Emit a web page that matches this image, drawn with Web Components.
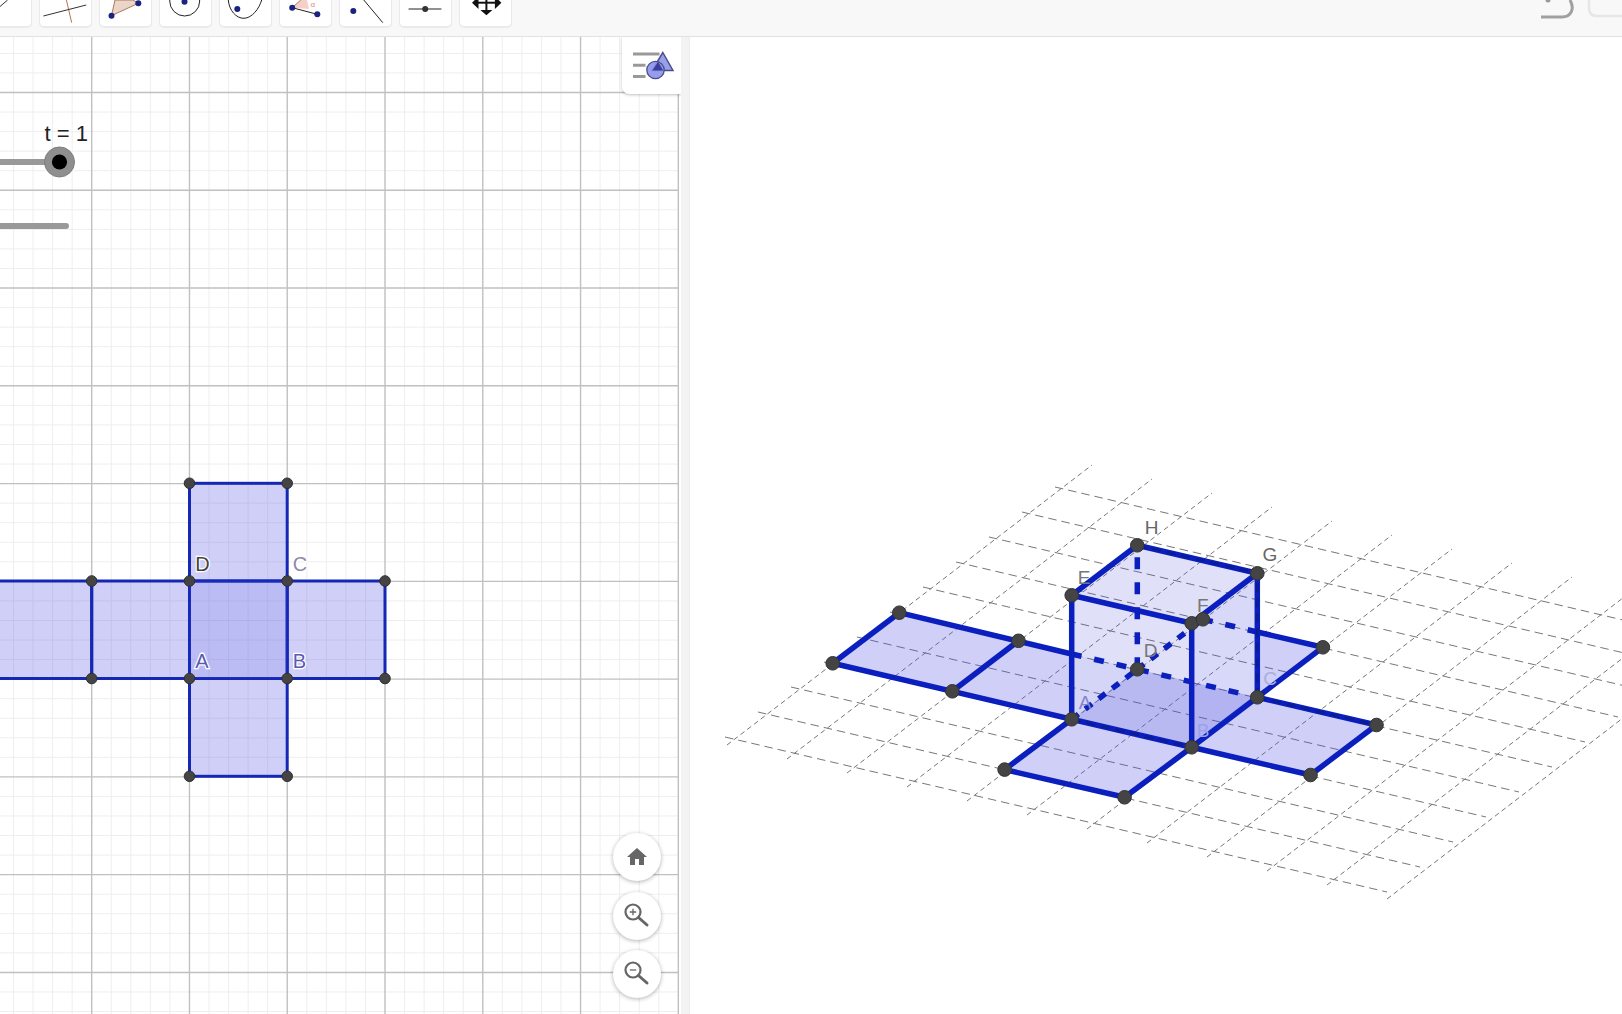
<!DOCTYPE html>
<html lang="en">
<head>
<meta charset="utf-8">
<title>Cube net</title>
<style>
  html, body { margin: 0; height: 100%; overflow: hidden; background: #fff; font-family: "Liberation Sans", Arial, sans-serif; }
</style>
</head>
<body>
<ggb-toolbar>
  <ggb-tool><svg viewBox="0 0 52 27"><path d="M20.4 7 28.6 0" stroke="#333" fill="none"/></svg></ggb-tool>
  <ggb-tool><svg viewBox="0 0 52 27"><path d="M27.4 0 32.7 22.7" stroke="#b5735a" fill="none"/><path d="M4.4 16 47.2 5" stroke="#333" fill="none"/></svg></ggb-tool>
  <ggb-tool><svg viewBox="0 0 52 27"><path d="M12.5 15.7 16 0H34L39.3 3.3Z" fill="#ead5c8" stroke="#a9785f"/><circle cx="12.5" cy="15.7" r="3" fill="#1a237e"/><circle cx="39.3" cy="3.3" r="3" fill="#1a237e"/></svg></ggb-tool>
  <ggb-tool><svg viewBox="0 0 52 27"><circle cx="25.7" cy="1" r="15" fill="none" stroke="#222"/><circle cx="25.5" cy="1.7" r="3" fill="#1a237e"/></svg></ggb-tool>
  <ggb-tool><svg viewBox="0 0 52 27"><path d="M9.3 0C10 10 17 18.5 25 18.3 33 18 40 9 42.7 0" fill="none" stroke="#222"/><circle cx="18.3" cy="9" r="3" fill="#1a237e"/></svg></ggb-tool>
  <ggb-tool><svg viewBox="0 0 52 27"><path d="M13.2 7.7 21.8 0H28L30 9Z" fill="#f6cfc8"/><path d="M13.2 7.7 21.8 0" stroke="#a9785f" fill="none"/><path d="M13.2 7.7 38.3 14.3" stroke="#222" fill="none"/><circle cx="13.2" cy="7.7" r="3" fill="#1a237e"/><circle cx="38.3" cy="14.3" r="3" fill="#1a237e"/><text x="31.5" y="7" font-size="8" fill="#d98f85" font-family="Liberation Sans">α</text></svg></ggb-tool>
  <ggb-tool><svg viewBox="0 0 52 27"><circle cx="14.3" cy="11" r="3" fill="#1a237e"/><path d="M24.8 0 43.8 22.7" stroke="#222" fill="none"/></svg></ggb-tool>
  <ggb-tool><svg viewBox="0 0 52 27"><path d="M9.6 9H42.4" stroke="#222" fill="none"/><circle cx="26.2" cy="9" r="3" fill="#333"/></svg></ggb-tool>
  <ggb-tool><svg viewBox="0 0 52 27"><path d="M27.4 0V11" stroke="#111" stroke-width="2" fill="none"/><path d="M18 2.7H37" stroke="#111" stroke-width="2" fill="none"/><path d="M13 2.7 19.5-3.5V9ZM42.4 2.7 35.9-3.5V9ZM27.4 15.2 21.4 10H33.4Z" fill="#111"/></svg></ggb-tool>
  <ggb-undo></ggb-undo>
</ggb-toolbar>
<ggb-workspace>
  <ggb-graphics>
    <ggb-style-button></ggb-style-button>
    <ggb-zoom-panel>
      <ggb-round-button><svg viewBox="0 0 24 24" width="24" height="24"><path d="M10 20v-6h4v6h5v-8h3L12 3 2 12h3v8z" fill="#666"/></svg></ggb-round-button>
      <ggb-round-button><svg viewBox="0 1.5 28 28" width="28" height="28" fill="none" stroke="#666"><circle cx="10" cy="11.5" r="7.5" stroke-width="2.2"/><path d="M15.5 17 24 24.5" stroke-width="3" stroke-linecap="round"/><path d="M6.8 11.5H13.2M10 8.3V14.7" stroke-width="1.3"/></svg></ggb-round-button>
      <ggb-round-button><svg viewBox="0 1.5 28 28" width="28" height="28" fill="none" stroke="#666"><circle cx="10" cy="11.5" r="7.5" stroke-width="2.2"/><path d="M15.5 17 24 24.5" stroke-width="3" stroke-linecap="round"/><path d="M6.8 11.5H13.2" stroke-width="1.3"/></svg></ggb-round-button>
    </ggb-zoom-panel>
  </ggb-graphics>
  <ggb-splitter></ggb-splitter>
  <ggb-view3d></ggb-view3d>
</ggb-workspace>

<script>
class GgbToolbar extends HTMLElement {
  constructor() {
    super();
    this.attachShadow({ mode: "open" }).innerHTML = `
      <style>
        :host { display: flex; height: 37px; box-sizing: border-box; background: #f8f8f8; border-bottom: 1px solid #e2e2e2; overflow: hidden; }
        .row { display: flex; flex: 1; gap: 7.3px; margin-left: -20.7px; align-items: flex-start; }
      </style>
      <div class="row"><slot></slot></div>`;
  }
}

class GgbTool extends HTMLElement {
  constructor() {
    super();
    this.attachShadow({ mode: "open" }).innerHTML = `
      <style>
        :host { display: block; flex: none; width: 52.7px; height: 27px; background: #fff; box-sizing: border-box;
                border: 1px solid #e9e9e9; border-top: 0; border-radius: 0 0 5px 5px; box-shadow: 0 1px 1px rgba(0,0,0,.06); }
        ::slotted(svg) { display: block; width: 52px; height: 27px; margin-left: -1px; overflow: hidden; }
      </style>
      <slot></slot>`;
  }
}

class GgbUndo extends HTMLElement {
  constructor() {
    super();
    this.attachShadow({ mode: "open" }).innerHTML = `
      <style>
        :host { display: block; margin-left: auto; flex: none; width: 92px; height: 36px; }
        svg { display: block; }
      </style>
      <svg width="92" height="36" viewBox="1530 0 92 36" fill="none">
        <circle cx="1548" cy="0" r="2.5" fill="#999"/>
        <path d="M1541 17H1562C1571 17 1575 9 1570 0" stroke="#a0a0a0" stroke-width="3"/>
        <path d="M1589 0V8Q1589 16 1597 16H1622" stroke="#e6e6e6" stroke-width="2.5"/>
      </svg>`;
  }
}

class GgbWorkspace extends HTMLElement {
  constructor() {
    super();
    this.attachShadow({ mode: "open" }).innerHTML = `
      <style>
        :host { display: flex; height: 977px; overflow: hidden; }
      </style>
      <slot></slot>`;
  }
}

class GgbGraphics extends HTMLElement {
  constructor() {
    super();
    const step = 97.77, x0 = 91.7, y0 = 92.5, minor = step / 5;
    let grid = "";
    for (let i = 0; i < 40; i++) {
      const x = x0 - step + i * minor;
      if (i % 5 && x < 678) grid += `<path d="M${x} 37V1014" stroke="#eee"/>`;
    }
    for (let i = 0; i < 60; i++) {
      const y = y0 - step + i * minor;
      if (i % 5 && y > 36 && y < 1014) grid += `<path d="M0 ${y}H678.5" stroke="#eee"/>`;
    }
    for (let i = 0; i < 7; i++) {
      grid += `<path d="M${x0 + i * step} 37V1014" stroke="#c0c0c0" stroke-width="1.4"/>`;
    }
    for (let i = 0; i < 10; i++) {
      grid += `<path d="M0 ${y0 + i * step}H678.5" stroke="#c0c0c0" stroke-width="1.4"/>`;
    }

    const X = [-6, 91.7, 189.5, 287.2, 385], Y = [483.3, 581, 678.5, 776.3];
    const rect = (x1, y1, x2, y2) => `<rect x="${x1}" y="${y1}" width="${x2 - x1}" height="${y2 - y1}" fill="rgb(77,77,225)" fill-opacity=".27" stroke="#1428b4" stroke-width="3"/>`;
    const net = rect(X[2], Y[0], X[3], Y[1]) + rect(X[0], Y[1], X[1], Y[2]) + rect(X[1], Y[1], X[2], Y[2])
      + rect(X[2], Y[1], X[3], Y[2]) + rect(X[3], Y[1], X[4], Y[2]) + rect(X[2], Y[2], X[3], Y[3])
      + `<rect x="${X[2]}" y="${Y[1]}" width="${X[3] - X[2]}" height="${Y[2] - Y[1]}" fill="rgb(77,77,235)" fill-opacity=".14"/>`;
    const pts = [[X[2], Y[0]], [X[3], Y[0]], [X[1], Y[1]], [X[2], Y[1]], [X[3], Y[1]], [X[4], Y[1]],
      [X[1], Y[2]], [X[2], Y[2]], [X[3], Y[2]], [X[4], Y[2]], [X[2], Y[3]], [X[3], Y[3]]]
      .map(p => `<circle cx="${p[0]}" cy="${p[1]}" r="5.3" fill="#444" stroke="#2e2e2e"/>`).join("");
    const label = (t, x, y, c) => `<text x="${x}" y="${y}" text-anchor="middle" font-size="20" fill="${c}" stroke="#fff" stroke-width="2.5" paint-order="stroke">${t}</text>`;

    this.attachShadow({ mode: "open" }).innerHTML = `
      <style>
        :host { display: block; position: relative; flex: none; width: 681px; height: 977px; background: #fff; overflow: hidden; }
        svg { display: block; font-family: "Liberation Sans", Arial, sans-serif; }
      </style>
      <svg width="681" height="977" viewBox="0 37 681 977">
        ${grid}
        ${net}
        ${pts}
        ${label("D", 202.5, 570.5, "#444")}
        ${label("C", 300, 570.5, "#8a8aac")}
        ${label("A", 202, 668, "#5a5ab4")}
        ${label("B", 299.5, 668, "#5a5ab4")}
        <path d="M0 162H50" stroke="#999" stroke-width="6"/>
        <circle cx="59.5" cy="162" r="15" fill="#8f8f8f" stroke="#7d7d7d"/>
        <circle cx="59.5" cy="162" r="7.6" fill="#000"/>
        <path d="M-5 226H66" stroke="#999" stroke-width="6" stroke-linecap="round"/>
        <text x="44.5" y="141.2" font-size="22" fill="#222">t = 1</text>
      </svg>
      <slot></slot>`;
  }
}

class GgbStyleButton extends HTMLElement {
  constructor() {
    super();
    this.attachShadow({ mode: "open" }).innerHTML = `
      <style>
        :host { display: block; position: absolute; top: 0; right: 0; width: 59.5px; height: 57px; background: #fff;
                border-radius: 0 0 0 7px; box-shadow: 0 1px 3px rgba(0,0,0,.25); }
        svg { display: block; }
      </style>
      <svg width="60" height="57" viewBox="621.5 37 60 57">
        <path d="M632.5 54H659M632.5 65.3H645M632.5 76.5H645" stroke="#999" stroke-width="3" fill="none"/>
        <path d="M662.3 52.5 672.5 70.5H651.5Z" fill="#9aa0e8" stroke="#4a4e8c" stroke-width="1.5"/>
        <circle cx="655" cy="70" r="8.7" fill="#8b92ea" fill-opacity=".9" stroke="#4a4e8c" stroke-width="1.3"/>
        <path d="M657.6 61.8 651.9 70.5H662.6Z" fill="#3a3f9c"/>
      </svg>`;
  }
}

class GgbZoomPanel extends HTMLElement {
  constructor() {
    super();
    this.attachShadow({ mode: "open" }).innerHTML = `
      <style>
        :host { display: flex; flex-direction: column; gap: 10.5px; position: absolute; left: 612.5px; bottom: 16px; }
      </style>
      <slot></slot>`;
  }
}

class GgbRoundButton extends HTMLElement {
  constructor() {
    super();
    this.attachShadow({ mode: "open" }).innerHTML = `
      <style>
        :host { display: flex; align-items: center; justify-content: center; width: 48px; height: 48px; border-radius: 50%;
                background: #fff; box-shadow: 0 1px 4px rgba(0,0,0,.3); }
        ::slotted(svg) { display: block; }
      </style>
      <slot></slot>`;
  }
}

class GgbSplitter extends HTMLElement {
  constructor() {
    super();
    this.attachShadow({ mode: "open" }).innerHTML = `
      <style>
        :host { display: block; flex: none; width: 8px; background: #f3f3f3; border-right: 1px solid #ececec; }
      </style>`;
  }
}

class GgbView3d extends HTMLElement {
  constructor() {
    super();
    const add = (p, q, k = 1) => [p[0] + q[0] * k, p[1] + q[1] * k];
    const u = [120, 28], v = [65.6, -50], up = [0, -124];
    const A = [1071.7, 719.3], B = add(A, u), D = add(A, v), C = add(B, v);
    const E = add(A, up), F = add(B, up), G = add(C, up), H = add(D, up);
    const D1 = [1018.5, 640.8], D2 = [899.3, 612.7], A1 = [952.3, 691.3], A2 = [832.7, 663.3];
    const B1 = [1310.5, 775], C1 = [1376.5, 725], Av = [1004.6, 769.6], Bv = [1124.6, 797.3];
    const Dv = add(D, v), Cv = add(C, v);

    let grid = "";
    for (let k = 0; k <= 11; k++) {
      const x = 727 + 60 * k, y = 745 + 14 * k;
      grid += `<path d="M${x} ${y}l365-280" stroke-dasharray="5 3.5"/>`;
    }
    for (let k = 0; k <= 10; k++) {
      const x = 725 + 33 * k, y = 737 - 25 * k;
      grid += `<path d="M${x} ${y}l662 155" stroke-dasharray="8.5 5"/>`;
    }

    const str = a => a.map(p => p.join(",")).join(" ");
    const poly = (a, op) => `<polygon points="${str(a)}" fill="rgb(77,77,225)" fill-opacity="${op}"/>`;
    const seg = (p, q, dash) => `<line x1="${p[0]}" y1="${p[1]}" x2="${q[0]}" y2="${q[1]}"${dash ? ` stroke-dasharray="${dash}"` : ""}/>`;
    const over = (p, q) => `<line x1="${p[0]}" y1="${p[1]}" x2="${q[0]}" y2="${q[1]}" stroke="#0a1c96" stroke-width="2.8" stroke-dasharray="9 6"/>`;

    const backCross = add(D, u, (A[0] - D[0]) / u[0]);
    const flapCross = add(Dv, u, (G[0] - Dv[0]) / u[0]);

    // the flaps behind the cube only show faintly through its faces
    const polys = [
      [D2, D1, A1, A2], [D1, backCross, A, A1], [A, B, Bv, Av], [B, C, C1, B1], [flapCross, Cv, C]
    ].map(a => poly(a, .27)).join("")
      + poly([backCross, D, A], .07)
      + poly([A, B, C, D], .33)
      + [[A, B, F, E], [C, D, H, G], [D, A, E, H], [E, F, G, H]].map(a => poly(a, .09)).join("")
      + poly([B, C, G, F], .14);

    const edges = [
      seg(D2, backCross), seg(backCross, C, "10 13"), seg(C, C1),
      seg(A2, A), seg(A, B), seg(B, B1), seg(D2, A2), seg(D1, A1), seg(A, Av), seg(Av, Bv), seg(Bv, B), seg(B, C), seg(C, Cv), seg(C1, B1),
      seg(Dv, flapCross, "10 13"), seg(flapCross, Cv), seg(A, D, "8.5 8.5"), seg(D, Dv, "8.5 8.5"),
      seg(D, H, "12 13"), seg(C, G),
      seg(H, G), seg(A, E), seg(B, F), seg(E, F), seg(F, G), seg(E, H),
      over(H, G), over(C, G), over(C, C1), over(A, B)
    ].join("");

    const pts = [A, B, C, D, E, F, G, H, D1, D2, A1, A2, B1, C1, Av, Bv, Dv, Cv]
      .map(p => `<circle cx="${p[0]}" cy="${p[1]}" r="6.8" fill="#444" stroke="#333"/>`).join("");
    const labels = [
      ["A", 1085, 708.5, "#8085cc"], ["B", 1203, 737, "#9aa2ec"], ["C", 1270, 685, "#a9aedb"], ["D", 1150.5, 657, "#777"],
      ["E", 1084, 584, "#777"], ["F", 1202.7, 612, "#777"], ["G", 1270, 561, "#666"], ["H", 1151.7, 534, "#666"]
    ].map(l => `<text x="${l[1]}" y="${l[2]}" text-anchor="middle" font-size="19" fill="${l[3]}">${l[0]}</text>`).join("");

    this.attachShadow({ mode: "open" }).innerHTML = `
      <style>
        :host { display: block; flex: 1; height: 977px; background: #fff; overflow: hidden; }
        svg { display: block; font-family: "Liberation Sans", Arial, sans-serif; }
      </style>
      <svg width="932" height="977" viewBox="690 37 932 977">
        <g stroke="#777" stroke-width="1" fill="none">${grid}</g>
        ${polys}
        <g stroke="#0a1fbe" stroke-width="5.5" fill="none">${edges}</g>
        ${pts}
        ${labels}
      </svg>`;
  }
}

customElements.define("ggb-toolbar", GgbToolbar);
customElements.define("ggb-tool", GgbTool);
customElements.define("ggb-undo", GgbUndo);
customElements.define("ggb-workspace", GgbWorkspace);
customElements.define("ggb-graphics", GgbGraphics);
customElements.define("ggb-style-button", GgbStyleButton);
customElements.define("ggb-zoom-panel", GgbZoomPanel);
customElements.define("ggb-round-button", GgbRoundButton);
customElements.define("ggb-splitter", GgbSplitter);
customElements.define("ggb-view3d", GgbView3d);
</script>
</body>
</html>
